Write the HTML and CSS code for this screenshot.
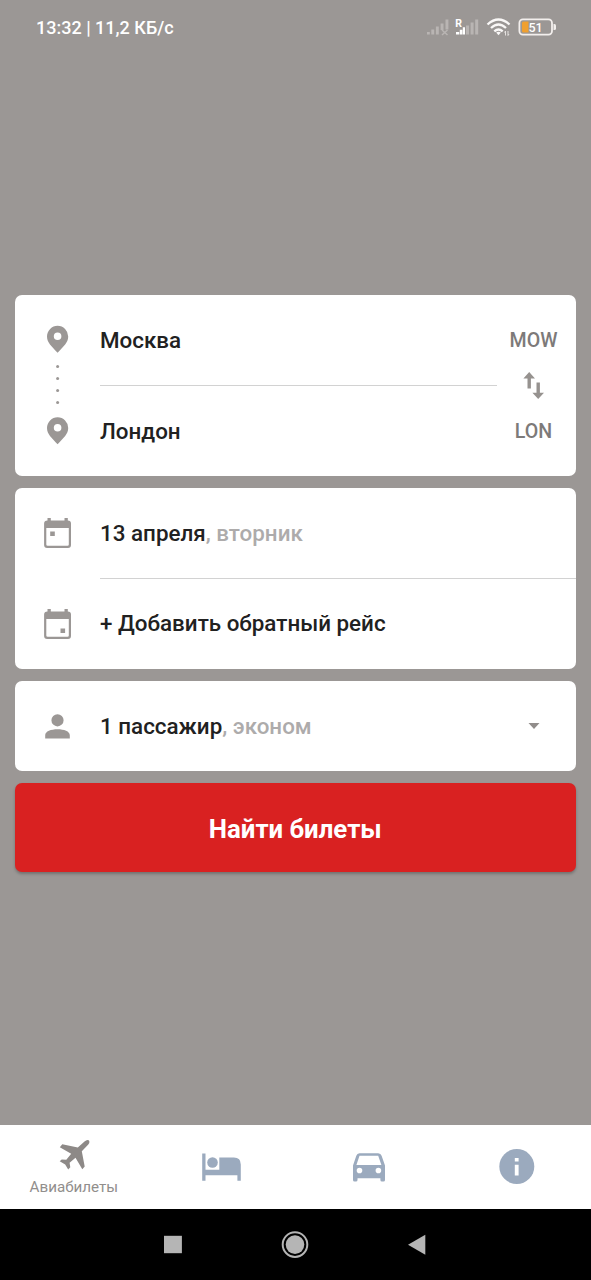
FILE: index.html
```html
<!DOCTYPE html>
<html lang="ru">
<head>
<meta charset="utf-8">
<title>Авиабилеты</title>
<link rel="stylesheet" href="styles.css">
</head>
<body>
<div class="screen">
  <header class="status">
    <span class="status-text">13:32 | 11,2 КБ/с</span>
    <svg class="status-icons" width="132" height="26" viewBox="425 14 132 26">
      <g fill="#b9b5b3">
        <path d="M427 32h2.800v2.500h-2.800zM431.300 29.500h2.900v5h-2.900zM435.900 26.500h2.900v8h-2.900zM440.600 23.500h2.900v6.500h-2.900zM445.500 19.500h2.900v10h-2.900z"/>
        <path d="M442 30l5.500 5M447.500 30l-5.500 5" stroke="#b9b5b3" stroke-width="1.500"/>
        <path d="M466 25.500h3v9h-3zM470.600 22.500h3v12h-3zM475.200 19.500h3v15h-3z"/>
      </g>
      <path d="M456 32h3.200v2.500H456zM459.800 29.800h2.600v4.700h-2.600zM462.800 27.300h2.200v7.200h-2.200z" fill="#fff"/>
      <text x="455.300" y="26.500" class="roaming">R</text>
      <g fill="none" stroke="#faf8f7" stroke-width="2.300">
        <path d="M487.500 24.500Q498.500 14.500 509.500 24.500M491 28Q498.500 21 506 28M494.300 31.400Q498.500 27.600 502.700 31.400"/>
      </g>
      <path d="M496.200 32.600Q498.500 31 500.800 32.600L498.500 35.300z" fill="#faf8f7"/>
      <path d="M505.500 35.500v-4.500l-1 1.500M508 31v4.500l1-1.500" fill="none" stroke="#e4e1df" stroke-width="1"/>
      <rect x="519.400" y="19.400" width="32.600" height="15.200" rx="3.500" fill="none" stroke="#f3efed" stroke-width="1.800"/>
      <path d="M523.500 21.500h5v11h-5q-1.500 0-1.500-1.500v-8q0-1.500 1.500-1.500z" fill="#f0a030"/>
      <path d="M553.500 24h1q1.500 0 1.500 1.500v3q0 1.500-1.500 1.500h-1z" fill="#f3efed"/>
      <text x="535.500" y="31.500" text-anchor="middle" class="battery">51</text>
    </svg>
  </header>

  <main class="search">
    <section class="card route">
      <svg class="route-pins" width="22" height="120" viewBox="47 325 22 120">
        <g fill="#9b9795">
          <path id="pin" fill-rule="evenodd" d="M57.600 325.800a10.600 10.600 0 0 0-10.600 10.600c0 6.200 4.500 9.600 10.600 16.400c6.100-6.800 10.600-10.200 10.600-16.400a10.600 10.600 0 0 0-10.600-10.600zm0 6.700a3.800 3.800 0 1 1 0 7.600a3.800 3.800 0 0 1 0-7.600z"/>
          <use href="#pin" y="91.500"/>
          <circle cx="57.600" cy="366.500" r="1.500"/>
          <circle cx="57.600" cy="378.500" r="1.500"/>
          <circle cx="57.600" cy="390.500" r="1.500"/>
          <circle cx="57.600" cy="402.500" r="1.500"/>
        </g>
      </svg>
      <div class="cities">
        <div class="row">Москва</div>
        <div class="row row-next">Лондон</div>
      </div>
      <div class="codes">
        <span class="code">MOW</span>
        <svg width="22" height="28" viewBox="523 371 22 28">
          <path d="M527.500 387.500v-10h-4.100l5.800-6.500l5.800 6.500h-4.100v10zM536.500 381.500v10.200h-4.100l5.800 6.300l5.800-6.300h-4.100v-10.200z" fill="#96928f"/>
        </svg>
        <span class="code">LON</span>
      </div>
    </section>

    <section class="card dates">
      <div class="line">
        <svg class="line-icon" width="28" height="32" viewBox="0 0 28 32">
          <path fill-rule="evenodd" d="M4 1h3.300v2.500h13.700V1h3.300v2.500q3.200 0 3.200 3v21.500q0 3-3 3H3.600q-3 0-3-3V6.500q0-3 3.400-3zM2.800 11v16.500q0 1.300 1.300 1.300h19.900q1.300 0 1.300-1.300V11zM6.700 14.500h4.600v4.500H6.700z" fill="#9b9795"/>
        </svg>
        <div class="row">13 апреля<span class="muted">, вторник</span></div>
      </div>
      <div class="line">
        <svg class="line-icon" width="28" height="32" viewBox="0 0 28 32">
          <path fill-rule="evenodd" d="M4 1h3.300v2.500h13.700V1h3.300v2.500q3.200 0 3.200 3v21.500q0 3-3 3H3.600q-3 0-3-3V6.500q0-3 3.400-3zM2.800 11v16.500q0 1.300 1.300 1.300h19.900q1.300 0 1.300-1.300V11zM17 20.500h4.600v4.500H17z" fill="#9b9795"/>
        </svg>
        <div class="row row-next">+ Добавить обратный рейс</div>
      </div>
    </section>

    <section class="card line passengers">
      <svg class="line-icon" width="26" height="26" viewBox="0 0 26 26">
        <path d="M13 1.200a6.100 6.100 0 1 0 0 12.200a6.100 6.100 0 0 0 0-12.200zM.7 25.500v-3.200C.7 18.300 6.500 16.300 13 16.300s12.300 2 12.300 6V25.500z" fill="#9b9795"/>
      </svg>
      <div class="row">1 пассажир<span class="muted">, эконом</span></div>
      <svg class="caret" width="12" height="8" viewBox="0 0 12 8"><path d="M.5 1h11L6 7z" fill="#918d8b"/></svg>
    </section>

    <button class="submit">Найти билеты</button>
  </main>

  <nav class="tabs">
    <div class="tab tab-active">
      <svg width="32" height="32" viewBox="58 1138.500 32 32">
        <path d="M84.500 1141Q86.800 1138.800 88.700 1139.800Q90.300 1141.500 88.300 1144L81.800 1150.700L84.700 1166L82.300 1168.800L75.500 1157.300L69.600 1162.300L70.300 1166.700L68.200 1169L65.200 1163.900L59.700 1160.800L61.700 1158.900L66.300 1159.300L71.200 1153.200L59.800 1146.800L62.300 1143.800L77.800 1147z" fill="#8d8987"/>
      </svg>
      <span>Авиабилеты</span>
    </div>
    <div class="tab">
      <svg width="40" height="28" viewBox="201.500 1153.500 40 28">
        <path d="M201.700 1154h3.300v16.200h13.800v-12.300h14.600q6.900 0 6.900 7v16.300h-3.400v-5.400h-31.900v5.400h-3.300z" fill="#9baabe"/>
        <circle cx="212" cy="1163" r="5.300" fill="#9baabe"/>
      </svg>
    </div>
    <div class="tab">
      <svg width="34" height="30" viewBox="352 1152.500 34 30">
        <path fill-rule="evenodd" d="M359.500 1153.800h18.700q2.600 0 3.400 2.500l3.400 9.700v14.500q0 1.600-1.600 1.600h-1.500q-1.500 0-1.500-1.600v-1.800h-22.900v1.800q0 1.600-1.600 1.600h-1.300q-1.600 0-1.600-1.600V1166l3.300-9.700q.8-2.500 3.200-2.500zM359.500 1156.200l-3.100 9.200h25l-3.200-9.200zM359.500 1168.200a2.800 2.800 0 1 0 0 5.600a2.800 2.800 0 0 0 0-5.600zM378.400 1168.200a2.800 2.800 0 1 0 0 5.600a2.800 2.800 0 0 0 0-5.600z" fill="#9baabe"/>
      </svg>
    </div>
    <div class="tab">
      <svg width="36" height="36" viewBox="0 0 36 36">
        <circle cx="17.800" cy="17.500" r="17.500" fill="#9baabe"/>
        <path d="M15.800 9h3.800v3.600h-3.800zM15.800 15.800h3.800v10.700h-3.800z" fill="#fff"/>
      </svg>
    </div>
  </nav>

  <footer class="system">
    <svg width="20" height="20" viewBox="0 0 20 20"><path d="M1 .8h17.900v17.400H1z" fill="#b5b5b5"/></svg>
    <svg width="28" height="28" viewBox="0 0 28 28">
      <circle cx="14" cy="13.600" r="12.300" fill="none" stroke="#b5b5b5" stroke-width="2"/>
      <circle cx="14" cy="13.600" r="9.300" fill="#b5b5b5"/>
    </svg>
    <svg width="20" height="22" viewBox="0 0 20 22"><path d="M18.300 .7v20L1 10.700z" fill="#b5b5b5"/></svg>
  </footer>
</div>
</body>
</html>
```
FILE: styles.css
```css
* { box-sizing: border-box; }

body {
  margin: 0;
  background: #9b9795;
  color: #212121;
  font-family: Roboto, "Noto Sans", sans-serif;
}

.screen {
  display: flex;
  flex-direction: column;
  width: 591px;
  height: 1280px;
}

svg { display: block; flex: none; }

.status {
  display: flex;
  justify-content: space-between;
  align-items: center;
  height: 54px;
  padding: 0 34px 0 36px;
  color: #fff;
}

.status-text { padding-top: 1px; font-size: 18px; font-weight: 500; }
.roaming { font-size: 10.500px; font-weight: 700; fill: #fff; }
.battery { font-size: 12.500px; font-weight: 500; fill: #fff; }

.search {
  display: flex;
  flex: 1;
  flex-direction: column;
  gap: 12px;
  padding: 241px 15.500px 0 15px;
}

.card {
  background: #fff;
  border-radius: 7px;
}

.route { display: flex; height: 181px; }
.route-pins { margin: 30px 31px 0 32px; }
.cities { flex: 1; }

.row {
  flex: 1;
  height: 90px;
  font-size: 22.400px;
  font-weight: 500;
  line-height: 91px;
  white-space: nowrap;
}

.row-next {
  height: 91px;
  border-top: 1px solid #d2d2d2;
}

.dates .row-next { line-height: 88px; }

.muted { color: #adabab; }

.codes {
  display: flex;
  flex-direction: column;
  align-items: center;
  justify-content: space-between;
  width: 74px;
  height: 181px;
  margin-right: 5px;
}

.code {
  height: 90px;
  color: #7d7a79;
  font-size: 19.600px;
  font-weight: 500;
  line-height: 92px;
}

.codes svg { margin: -20px 0; }

.dates { height: 181px; }

.line { display: flex; align-items: center; }
.line-icon { width: 85px; }
.passengers { height: 90px; }
.caret { margin-right: 35.500px; }

.submit {
  height: 89px;
  padding: 3px 0 0;
  border: 0;
  border-radius: 7px;
  background: #d92121;
  box-shadow: 0 2px 3px rgba(0, 0, 0, .25);
  color: #fff;
  font: 700 25.800px Roboto, "Noto Sans", sans-serif;
}

.tabs {
  display: grid;
  grid-template-columns: repeat(4, 1fr);
  height: 84.500px;
  background: #fff;
}

.tab {
  display: flex;
  flex-direction: column;
  align-items: center;
  justify-content: center;
}

.tab-active {
  gap: 7px;
  padding-top: 1px;
  color: #918e8c;
  font-size: 15.200px;
  line-height: 18px;
}

.system {
  display: flex;
  align-items: center;
  justify-content: center;
  gap: 98px;
  height: 71px;
  padding-right: 2px;
  background: #000;
}
```
